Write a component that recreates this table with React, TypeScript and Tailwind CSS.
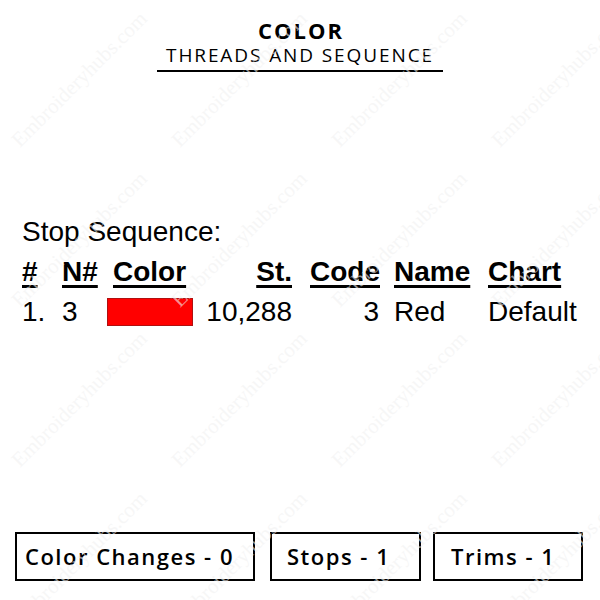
const marks = Array.from({ length: 16 }, (_, i) => i)

export default function App() {
  const head = 'font-bold underline decoration-[3px] underline-offset-[4px]'
  return (
    <div className="relative w-[600px] h-[600px] bg-white text-black flex flex-col overflow-hidden">
      <div className="flex flex-col items-center pt-[16px] font-['Open_Sans',sans-serif]">
        <div className="text-[22px] leading-[28px] font-bold tracking-[2px] pl-[2px]">COLOR</div>
        <div className="text-[19px] leading-[22px] tracking-[1.9px] px-[9px] border-b-2 border-black pb-[4px]">
          THREADS AND SEQUENCE
        </div>
      </div>

      <div className="mt-[140px] pl-[22px] font-['Liberation_Sans',Arial,sans-serif] text-[28px] leading-[40px]">
        <div>Stop Sequence:</div>
        <div className="flex">
          <span className={`w-[40px] ${head}`}>#</span>
          <span className={`w-[51px] ${head}`}>N#</span>
          <span className={`w-[100px] ${head}`}>Color</span>
          <span className={`w-[79px] text-right ${head}`}>St.</span>
          <span className={`w-[102px] pl-[18px] ${head}`}>Code</span>
          <span className={`w-[94px] ${head}`}>Name</span>
          <span className={head}>Chart</span>
        </div>
        <div className="flex items-center">
          <span className="w-[40px]">1.</span>
          <span className="w-[45px]">3</span>
          <span className="w-[86px] h-[28px] bg-[#ff0000] border border-[#b01010]"></span>
          <span className="w-[99px] text-right">10,288</span>
          <span className="w-[87px] text-right">3</span>
          <span className="w-[109px] pl-[15px]">Red</span>
          <span>Default</span>
        </div>
      </div>

      <div className="mt-auto mb-[19px] flex pl-[15px] font-['Open_Sans',sans-serif] text-[22px] font-semibold tracking-[1.5px]">
        <div className="w-[240px] h-[49px] border-2 border-black flex items-center pl-[8px]">Color Changes - 0</div>
        <div className="ml-[15px] w-[151px] h-[49px] border-2 border-black flex items-center pl-[15px]">Stops - 1</div>
        <div className="ml-[12px] w-[150px] h-[49px] border-2 border-black flex items-center pl-[16px]">Trims - 1</div>
      </div>

      <div className="pointer-events-none absolute left-0 top-0 w-[640px] h-[640px] grid grid-cols-4 grid-rows-4">
        {marks.map((i) => (
          <div key={i} className="flex items-center justify-center">
            <span className="-rotate-45 whitespace-nowrap font-['Liberation_Serif',serif] text-[21px] text-[#f1f1f1]/60">
              Embroideryhubs.com
            </span>
          </div>
        ))}
      </div>
    </div>
  )
}
